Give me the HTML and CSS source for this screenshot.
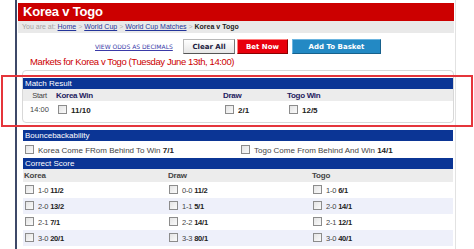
FILE: index.html
```html
<!DOCTYPE html>
<html lang="en">
<head>
    <meta charset="UTF-8">
    <title>Korea v Togo</title>
    <link rel="stylesheet" href="styles.css">
</head>
<body>

<div class="page">
    <div class="match-head">Korea v Togo</div>

    <div class="crumbs">
        You are at: <a href="#">Home</a> <span class="sep">&gt;</span> <a href="#">World Cup</a> <span class="sep">&gt;</span> <a href="#">World Cup Matches</a> <span class="sep">&gt;</span> <b>Korea v Togo</b>
    </div>

    <div class="actions">
        <a class="decimals" href="#">VIEW ODDS AS DECIMALS</a>
        <button class="btn btn-clear">Clear All</button>
        <button class="btn btn-bet">Bet Now</button>
        <button class="btn btn-basket">Add To Basket</button>
    </div>

    <h2 class="markets-title">Markets for Korea v Togo (Tuesday June 13th, 14:00)</h2>

    <!-- Match result -->
    <div class="market-panel">
        <div class="market-head">Match Result</div>
        <div class="row result-row row-head">
            <div class="start">Start</div>
            <div>Korea Win</div>
            <div>Draw</div>
            <div>Togo Win</div>
        </div>
        <div class="row result-row row-odds">
            <div class="start">14:00</div>
            <div><span class="cb"></span><b>11/10</b></div>
            <div><span class="cb"></span><b>2/1</b></div>
            <div><span class="cb"></span><b>12/5</b></div>
        </div>
    </div>

    <!-- Bouncebackability -->
    <div class="section">
        <div class="market-head">Bouncebackability</div>
        <div class="row bounce-row">
            <div><span class="cb"></span>Korea Come FRom Behind To Win <b>7/1</b></div>
            <div><span class="cb"></span>Togo Come From Behind And Win <b>14/1</b></div>
        </div>

        <div class="market-head">Correct Score</div>
        <div class="row score-row row-head">
            <div>Korea</div>
            <div>Draw</div>
            <div>Togo</div>
        </div>
        <div class="row score-row">
            <div><span class="cb"></span>1-0 <b>11/2</b></div>
            <div><span class="cb"></span>0-0 <b>11/2</b></div>
            <div><span class="cb"></span>1-0 <b>6/1</b></div>
        </div>
        <div class="row score-row alt">
            <div><span class="cb"></span>2-0 <b>13/2</b></div>
            <div><span class="cb"></span>1-1 <b>5/1</b></div>
            <div><span class="cb"></span>2-0 <b>14/1</b></div>
        </div>
        <div class="row score-row">
            <div><span class="cb"></span>2-1 <b>7/1</b></div>
            <div><span class="cb"></span>2-2 <b>14/1</b></div>
            <div><span class="cb"></span>2-1 <b>12/1</b></div>
        </div>
        <div class="row score-row alt">
            <div><span class="cb"></span>3-0 <b>20/1</b></div>
            <div><span class="cb"></span>3-3 <b>80/1</b></div>
            <div><span class="cb"></span>3-0 <b>40/1</b></div>
        </div>
    </div>
</div>

<!-- annotation drawn over the match result -->
<div class="highlight"></div>

</body>
</html>
```

FILE: styles.css
```css
/* Global */
body {
    margin: 0;
    font-family: "Liberation Sans", Arial, sans-serif;
    background-color: #fff;
    color: #333;
    position: relative;
}

/* Page column with the dark left rule */
.page {
    margin-left: 15px;
    width: 436px;
    min-height: 249px;
    padding: 3px 1px 0 1px;
    border-left: 2px solid #3d4868;
    border-right: 1px solid #e2e2e2;
    box-sizing: content-box;
}

/* Red title bar */
.match-head {
    height: 18px;
    line-height: 18px;
    background-color: #cc0000;
    color: #fff;
    font-weight: bold;
    font-size: 13px;
    letter-spacing: -0.2px;
    padding-left: 5px;
}

/* Breadcrumb */
.crumbs {
    height: 12px;
    line-height: 12px;
    background-color: #e9e9e9;
    color: #a3a3a3;
    font-size: 7px;
    padding-left: 4px;
    white-space: nowrap;
}

.crumbs a {
    color: #24359a;
    text-decoration: underline;
}

.crumbs .sep {
    color: #b0b0b0;
}

.crumbs b {
    color: #222;
}

/* Button row */
.actions {
    display: flex;
    align-items: center;
    margin-top: 6px;
    padding-left: 77px;
    height: 15px;
}

.decimals {
    font-family: "DejaVu Sans", Verdana, sans-serif;
    font-size: 6px;
    color: #3a3aa8;
    text-decoration: underline;
    margin-right: 5px;
    width: 83px;
    white-space: nowrap;
}

.btn {
    height: 15px;
    padding: 0;
    font-family: "DejaVu Sans", Verdana, sans-serif;
    font-weight: bold;
    font-size: 7px;
    border: 1px solid;
    cursor: pointer;
}

.btn-clear {
    width: 52px;
    background: linear-gradient(#ffffff, #e6e6e6);
    border-color: #b8b8b8 #777 #555 #b8b8b8;
    color: #1a1a40;
    margin-right: 2px;
}

.btn-bet {
    width: 51px;
    background-color: #e8000c;
    border-color: #ff8080 #8a0000 #8a0000 #ff8080;
    color: #fff;
    margin-right: 4px;
}

.btn-basket {
    width: 89px;
    background-color: #2389c4;
    border-color: #6bb5e0 #17618c #17618c #6bb5e0;
    color: #fff;
}

/* Markets title */
.markets-title {
    margin: 3px 0 0 12px;
    font-size: 9.5px;
    font-weight: normal;
    letter-spacing: -0.4px;
    line-height: 10px;
    color: #cc0000;
    white-space: nowrap;
}

/* Panel around match result */
.market-panel {
    margin: 3px 0 0 4px;
    width: 430px;
    border: 1px solid #d8d8d8;
    border-radius: 4px;
    padding: 7px 0 4px 0;
}

.section {
    margin: 7px 0 0 5px;
    width: 430px;
}

/* Blue section header */
.market-head {
    height: 11px;
    line-height: 11px;
    background-color: #0b3595;
    color: #fff;
    font-size: 8px;
    padding-left: 2px;
}

/* Rows */
.row {
    display: grid;
    align-items: center;
    font-size: 8px;
}

.row b {
    color: #222;
}

.row-head {
    height: 12px;
    background-color: #ececec;
    font-weight: bold;
    color: #1e2160;
}

.result-row {
    grid-template-columns: 33px 167px 64px 1fr;
}

.result-row .start {
    text-align: center;
    font-weight: normal;
    font-size: 7.5px;
    color: #444;
}

.result-row.row-head div {
    letter-spacing: -0.3px;
}

.row-odds {
    height: 17px;
}

.row-odds .cb {
    margin-left: 2px;
}

.bounce-row {
    grid-template-columns: 216px 1fr;
    height: 17px;
    padding-left: 2px;
    color: #444;
}

.score-row {
    grid-template-columns: 144px 144px 1fr;
    height: 16px;
    padding-left: 1px;
    font-size: 7.5px;
    letter-spacing: -0.2px;
    color: #444;
}

.score-row.row-head {
    height: 13px;
    font-size: 8px;
}

.score-row .cb {
    margin-left: 1px;
}

.alt {
    background-color: #eef0fa;
}

/* Checkbox */
.cb {
    display: inline-block;
    width: 7px;
    height: 7px;
    border: 1px solid #8c8c8c;
    background: linear-gradient(135deg, #e4e4e4, #fafafa);
    vertical-align: -1px;
    margin-right: 4px;
}

/* Red annotation outline */
.highlight {
    position: absolute;
    left: 1px;
    top: 75px;
    width: 468px;
    height: 48px;
    border: 2px solid #e5353b;
}
```
